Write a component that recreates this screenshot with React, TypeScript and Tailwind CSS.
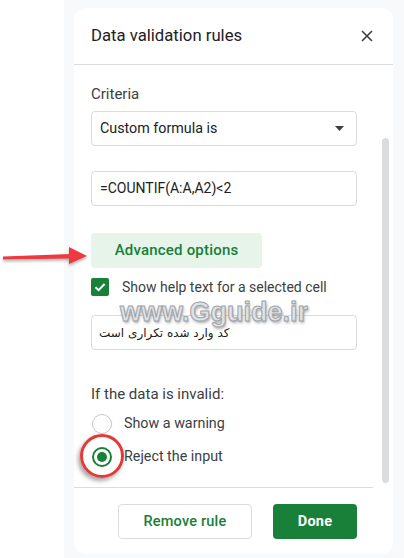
import React from "react";

export default function App() {
  return (
    <div className="relative w-[404px] h-[558px] bg-white flex font-['Roboto',sans-serif] overflow-hidden">
      <div className="w-[64px] shrink-0 bg-white" />
      <div className="flex-1 bg-[#f8f9fb] pl-[10px] pt-[8px] pr-[11px] pb-[4px]">
        <div className="w-[319px] h-[546px] bg-white rounded-[12px] flex flex-col">
          {/* header */}
          <div className="h-[57px] flex items-center justify-between pl-[17px] pr-[20px] border-b border-[#dadce0]">
            <span className="text-[16.7px] text-[#202124]">Data validation rules</span>
            <svg width="12" height="12" viewBox="0 0 12 12">
              <path d="M1 1 L11 11 M11 1 L1 11" stroke="#3c4043" strokeWidth="1.6" />
            </svg>
          </div>
          {/* content */}
          <div className="h-[422px] flex overflow-hidden">
            <div className="w-[283px] pl-[17px] flex flex-col">
              <div className="mt-[19px] text-[15px] leading-[20px] text-[#3c4043]">Criteria</div>
              <div className="mt-[7px] w-[266px] h-[35px] border border-[#dadce0] rounded-[4px] flex items-center justify-between pl-[8px] pr-[12px]">
                <span className="text-[14.3px] text-[#202124]">Custom formula is</span>
                <svg width="9" height="5" viewBox="0 0 9 5">
                  <path d="M0 0 L9 0 L4.5 5 Z" fill="#3c4043" />
                </svg>
              </div>
              <div className="mt-[25px] w-[266px] h-[35px] border border-[#dadce0] rounded-[4px] flex items-center pl-[8px]">
                <span className="text-[14px] text-[#202124]">=COUNTIF(A:A,A2)&lt;2</span>
              </div>
              <div className="mt-[27px] w-[171px] h-[35px] bg-[#e6f4ea] rounded-[4px] flex items-center justify-center">
                <span className="text-[15px] font-medium text-[#188038] tracking-[0.2px]">Advanced options</span>
              </div>
              <div className="mt-[10px] h-[18px] flex items-center">
                <div className="w-[18px] h-[18px] rounded-[2px] bg-[#188038] flex items-center justify-center">
                  <svg width="14" height="14" viewBox="0 0 14 14">
                    <path d="M2.5 7.2 L5.6 10.2 L11.6 4" stroke="white" strokeWidth="2" fill="none" />
                  </svg>
                </div>
                <span className="ml-[13px] text-[14px] text-[#3c4043]">Show help text for a selected cell</span>
              </div>
              <div className="mt-[19px] w-[266px] h-[35px] border border-[#dadce0] rounded-[4px] flex items-center pl-[7px]">
                <span dir="rtl" className="text-[12px] text-[#202124] font-['DejaVu_Sans',sans-serif]">کد وارد شده تکراری است</span>
              </div>
              <div className="mt-[34px] text-[15px] leading-[20px] text-[#3c4043]">If the data is invalid:</div>
              <div className="mt-[10px] h-[20px] flex items-center">
                <div className="ml-[1px] w-[20px] h-[20px] rounded-full border-[1.5px] border-[#c4c7c5]" />
                <span className="ml-[12px] text-[14.3px] text-[#3c4043]">Show a warning</span>
              </div>
              <div className="mt-[13px] h-[20px] flex items-center">
                <div className="ml-[1px] w-[20px] h-[20px] rounded-full border-2 border-[#188038] flex items-center justify-center">
                  <div className="w-[10px] h-[10px] rounded-full bg-[#188038]" />
                </div>
                <span className="ml-[12px] text-[14.3px] text-[#3c4043]">Reject the input</span>
              </div>
            </div>
            <div className="w-[7px] ml-[25px] mt-[73px] h-[345px] rounded-full bg-[#dadce0]" />
          </div>
          {/* footer */}
          <div className="w-[299px] h-px bg-[#dadce0]" />
          <div className="flex justify-end gap-[21px] pr-[36px] pt-[16px]">
            <div className="w-[134px] h-[35px] border border-[#dadce0] rounded-[4px] flex items-center justify-center">
              <span className="text-[14.5px] font-medium text-[#188038] tracking-[0.2px]">Remove rule</span>
            </div>
            <div className="w-[84px] h-[35px] bg-[#188038] rounded-[4px] flex items-center justify-center">
              <span className="text-[14.5px] font-bold text-white tracking-[0.2px]">Done</span>
            </div>
          </div>
        </div>
      </div>

      {/* red arrow overlay */}
      <svg className="absolute left-0 top-[244px]" width="92" height="26" viewBox="0 0 92 26">
        <defs>
          <filter id="sh" x="-10%" y="-40%" width="130%" height="200%">
            <feDropShadow dx="0" dy="2" stdDeviation="1.5" floodColor="#000" floodOpacity="0.3" />
          </filter>
        </defs>
        <g filter="url(#sh)">
          <path d="M3 12.5 L71 10 L71 14.5 L3 15.5 Z" fill="#ec3a3f" />
          <path d="M69 3 L87 12 L69 20 Z" fill="#ec3a3f" />
        </g>
      </svg>

      {/* watermark */}
      <div className="absolute left-[120px] top-[296px] text-[27px] font-bold leading-[32px] font-['Liberation_Sans',sans-serif] text-[#dfe2e6] [-webkit-text-stroke:1px_#9ea3aa] [text-shadow:1px_2px_3px_rgba(0,0,0,0.35)]">
        www.Gguide.ir
      </div>

      {/* red circle highlight */}
      <div className="absolute left-[80px] top-[434px] w-[44px] h-[44px] rounded-full border-[3px] border-[#e53935] shadow-[-2px_3px_4px_rgba(0,0,0,0.35)]" />
    </div>
  );
}
